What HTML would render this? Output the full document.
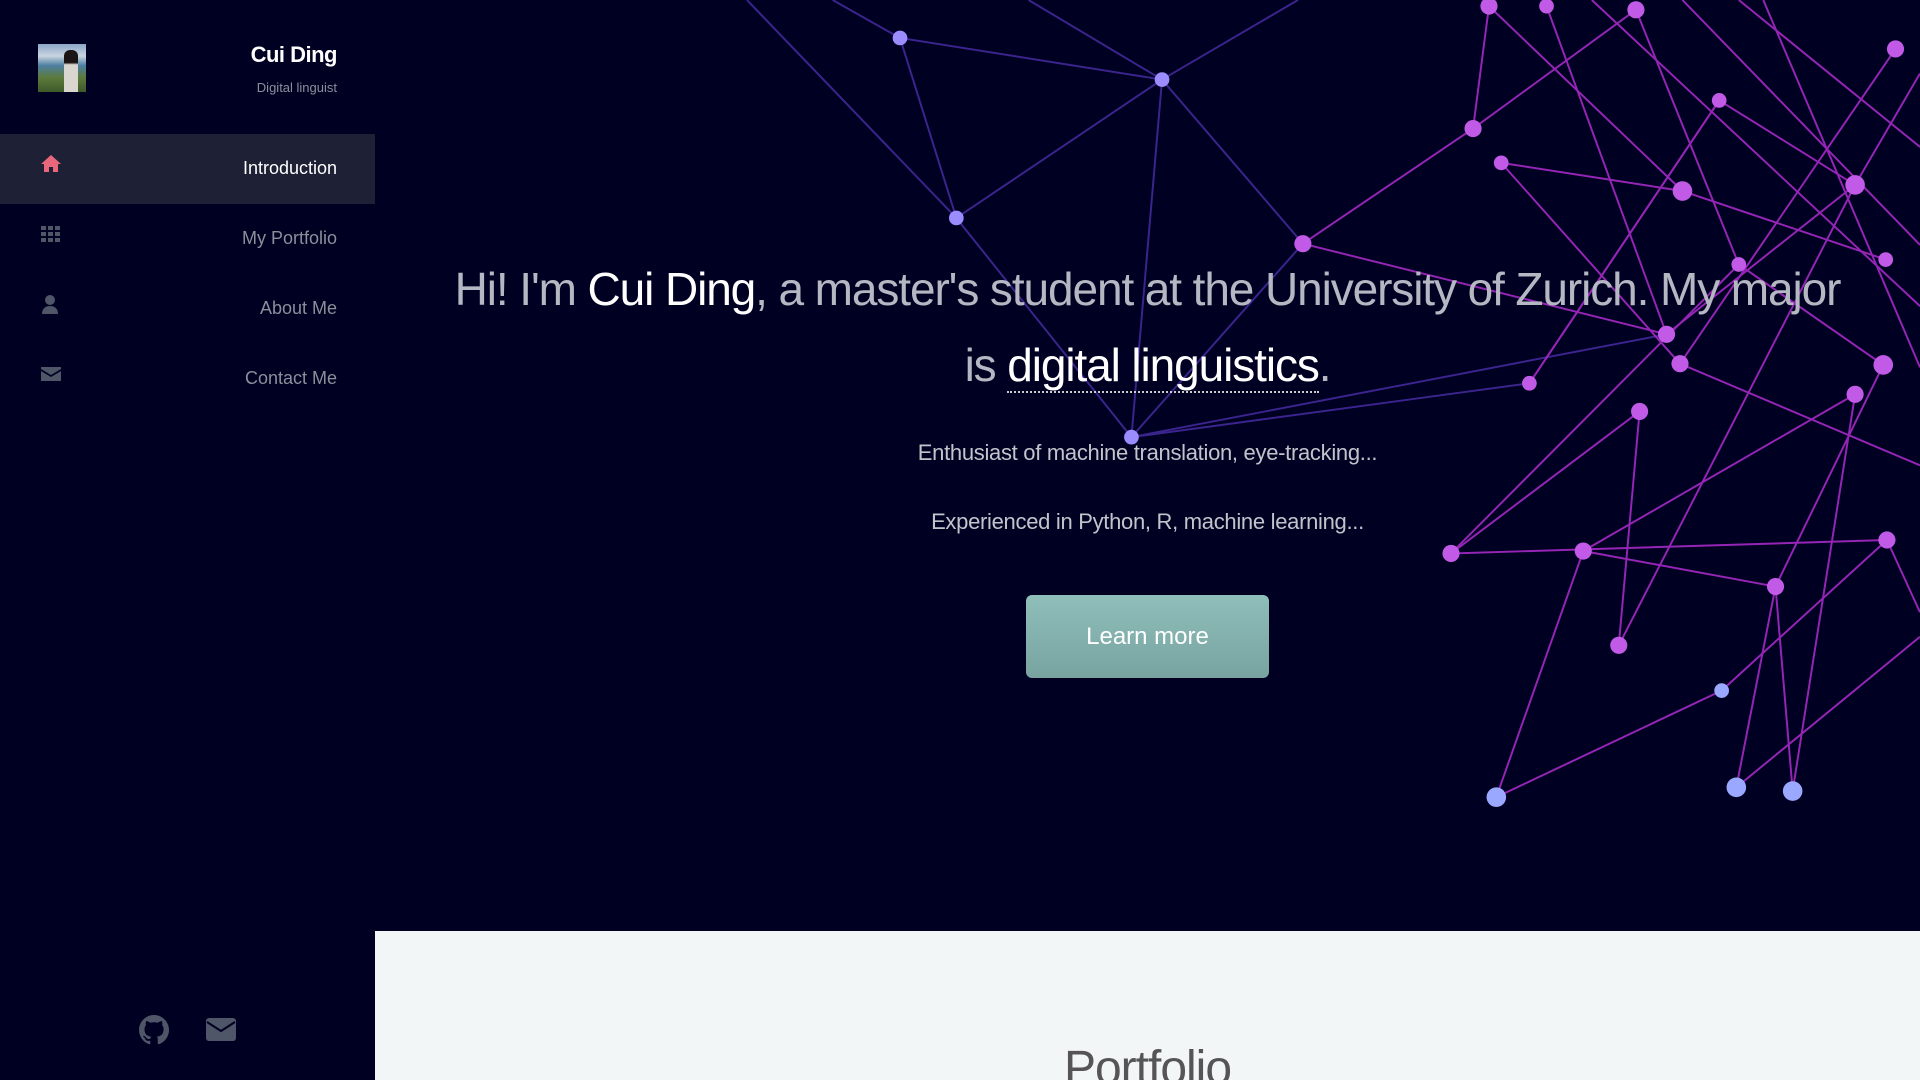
<!DOCTYPE html>
<html style="overflow:hidden;width:1920px;height:1080px"><head><meta charset="utf-8"><style>
*{margin:0;padding:0;box-sizing:border-box}
body{width:1920px;height:1080px;overflow:hidden;background:#000022;font-family:"Liberation Sans",sans-serif;position:relative}
.side{position:absolute;left:0;top:0;width:375px;height:1080px;background:#000022}
.avatar{position:absolute;left:38px;top:44px;width:48px;height:48px;background:linear-gradient(180deg,#8aa6c8 0%,#c9d4e0 25%,#4d7fa0 45%,#5d7a3c 70%,#3d5a2a 100%)}
.avatar:after{content:"";position:absolute;left:26px;top:6px;width:14px;height:42px;background:linear-gradient(#1a1414 30%,#d8d6cf 35%);border-radius:6px 6px 0 0}
.name{position:absolute;right:38px;top:42px;color:#fff;font-weight:bold;font-size:22px;letter-spacing:-0.5px}
.role{position:absolute;right:38px;top:80px;color:#8a8f9a;font-size:13px}
.nav{position:absolute;left:0;width:375px;height:70px}
.nav.active{background:#1e2035}
.nav span{position:absolute;right:38px;top:24px;font-size:18px;color:#8a8f9a}
.nav.active span{color:#fff}
.nav svg{position:absolute;left:40px;top:20px}
.hero{position:absolute;left:375px;top:0;width:1545px;height:931px;background:#000022;overflow:hidden}
.bottom{position:absolute;left:375px;top:931px;width:1545px;height:149px;background:#f2f6f6;overflow:hidden}
.bottom h2{position:absolute;width:100%;text-align:center;top:110px;font-size:48px;font-weight:normal;color:#555;letter-spacing:-1px}
.h1{position:absolute;left:0;width:1545px;text-align:center;color:#b5b8c2;font-size:46px;letter-spacing:-1.1px;white-space:nowrap}
.h1 b{font-weight:normal;color:#fff}
.u{border-bottom:2px dotted #ccc;color:#fff}
.p{position:absolute;left:0;width:1545px;text-align:center;color:#c2c4cc;font-size:22px;letter-spacing:-0.3px}
.btn{position:absolute;left:651px;top:595px;width:243px;height:83px;border-radius:6px;background:linear-gradient(#8fbfba,#78a3a0);color:#fff;font-size:24px;text-align:center;line-height:83px}
</style></head><body>
<div class="hero">
<svg style="position:absolute;left:-375px;top:0" width="1920" height="1080" viewBox="0 0 1568 882">
<g stroke-width="1.6" fill="none">
<g stroke="#4a2ea8" opacity=".8">
<line x1="610" y1="0" x2="781" y2="178"/><line x1="735" y1="31" x2="781" y2="178"/><line x1="735" y1="31" x2="949" y2="65"/><line x1="680" y1="0" x2="735" y2="31"/><line x1="781" y1="178" x2="949" y2="65"/><line x1="949" y1="65" x2="924" y2="357"/><line x1="781" y1="178" x2="924" y2="357"/><line x1="949" y1="65" x2="1060" y2="0"/><line x1="949" y1="65" x2="1064" y2="199"/><line x1="924" y1="357" x2="1064" y2="199"/><line x1="924" y1="357" x2="1249" y2="313"/><line x1="924" y1="357" x2="1361" y2="273"/><line x1="840" y1="0" x2="949" y2="65"/>
</g>
<g stroke="#b02ccf" opacity=".85">
<line x1="1064" y1="199" x2="1203" y2="105"/><line x1="1064" y1="199" x2="1361" y2="273"/><line x1="1203" y1="105" x2="1216" y2="5"/><line x1="1226" y1="133" x2="1374" y2="156"/><line x1="1203" y1="105" x2="1336" y2="8"/><line x1="1226" y1="133" x2="1372" y2="297"/><line x1="1216" y1="5" x2="1374" y2="156"/><line x1="1263" y1="5" x2="1361" y2="273"/><line x1="1336" y1="8" x2="1420" y2="216"/><line x1="1404" y1="82" x2="1515" y2="151"/><line x1="1404" y1="82" x2="1249" y2="313"/><line x1="1374" y1="156" x2="1540" y2="212"/><line x1="1420" y1="216" x2="1538" y2="298"/><line x1="1361" y1="273" x2="1515" y2="151"/><line x1="1372" y1="297" x2="1548" y2="40"/><line x1="1339" y1="336" x2="1185" y2="452"/><line x1="1339" y1="336" x2="1322" y2="527"/><line x1="1515" y1="322" x2="1293" y2="450"/><line x1="1538" y1="298" x2="1450" y2="479"/><line x1="1450" y1="479" x2="1418" y2="643"/><line x1="1541" y1="441" x2="1406" y2="564"/><line x1="1450" y1="479" x2="1464" y2="646"/><line x1="1293" y1="450" x2="1222" y2="651"/><line x1="1406" y1="564" x2="1222" y2="651"/><line x1="1185" y1="452" x2="1541" y2="441"/><line x1="1322" y1="527" x2="1515" y2="151"/><line x1="1464" y1="646" x2="1515" y2="322"/><line x1="1568" y1="520" x2="1418" y2="643"/><line x1="1374" y1="0" x2="1568" y2="200"/><line x1="1420" y1="0" x2="1568" y2="120"/><line x1="1249" y1="313" x2="1404" y2="82"/><line x1="1372" y1="297" x2="1568" y2="380"/><line x1="1293" y1="450" x2="1450" y2="479"/><line x1="1515" y1="151" x2="1568" y2="60"/><line x1="1440" y1="0" x2="1568" y2="300"/><line x1="1300" y1="0" x2="1568" y2="250"/><line x1="1185" y1="452" x2="1420" y2="216"/><line x1="1541" y1="441" x2="1568" y2="500"/>
</g>
</g>
<g fill="#9b8cff">
<circle cx="735" cy="31" r="6"/><circle cx="949" cy="65" r="6"/><circle cx="781" cy="178" r="6"/><circle cx="924" cy="357" r="6"/>
<circle cx="1222" cy="651" r="8" fill="#9aa8ff"/><circle cx="1418" cy="643" r="8" fill="#9aa8ff"/><circle cx="1464" cy="646" r="8" fill="#9aa8ff"/><circle cx="1406" cy="564" r="6" fill="#9aa8ff"/>
</g>
<g fill="#c25ae8">
<circle cx="1064" cy="199" r="7"/><circle cx="1203" cy="105" r="7"/><circle cx="1226" cy="133" r="6"/><circle cx="1216" cy="5" r="7"/><circle cx="1263" cy="5" r="6"/><circle cx="1336" cy="8" r="7"/><circle cx="1374" cy="156" r="8"/><circle cx="1404" cy="82" r="6"/><circle cx="1420" cy="216" r="6"/><circle cx="1361" cy="273" r="7"/><circle cx="1372" cy="297" r="7"/><circle cx="1249" cy="313" r="6"/><circle cx="1339" cy="336" r="7"/><circle cx="1515" cy="151" r="8"/><circle cx="1540" cy="212" r="6"/><circle cx="1538" cy="298" r="8"/><circle cx="1515" cy="322" r="7"/><circle cx="1185" cy="452" r="7"/><circle cx="1293" cy="450" r="7"/><circle cx="1322" cy="527" r="7"/><circle cx="1450" cy="479" r="7"/><circle cx="1541" cy="441" r="7"/><circle cx="1548" cy="40" r="7"/>
</g>
</svg>
<div class="h1" style="top:262px">Hi! I'm <b>Cui Ding</b>, a master's student at the University of Zurich. My major</div>
<div class="h1" style="top:338px">is <span class="u">digital linguistics</span>.</div>
<div class="p" style="top:440px">Enthusiast of machine translation, eye-tracking...</div>
<div class="p" style="top:509px">Experienced in Python, R, machine learning...</div>
<div class="btn">Learn more</div>
</div>
<div class="bottom"><h2>Portfolio</h2></div>
<div class="side">
<div class="avatar"></div>
<div class="name">Cui Ding</div>
<div class="role">Digital linguist</div>
<div class="nav active" style="top:134px"><svg width="22" height="20" viewBox="0 0 22 20"><path d="M11 1L1 10h3v8h5v-5h4v5h5v-8h3z" fill="#e8677a"/></svg><span>Introduction</span></div>
<div class="nav" style="top:204px"><svg width="22" height="20" viewBox="0 0 22 20"><g fill="#4f5668"><rect x="1" y="2" width="5" height="4"/><rect x="8" y="2" width="5" height="4"/><rect x="15" y="2" width="5" height="4"/><rect x="1" y="8" width="5" height="4"/><rect x="8" y="8" width="5" height="4"/><rect x="15" y="8" width="5" height="4"/><rect x="1" y="14" width="5" height="4"/><rect x="8" y="14" width="5" height="4"/><rect x="15" y="14" width="5" height="4"/></g></svg><span>My Portfolio</span></div>
<div class="nav" style="top:274px"><svg width="22" height="22" viewBox="0 0 22 22"><g fill="#4f5668"><circle cx="10" cy="6" r="5"/><path d="M2 20c0-5 3-8 8-8s8 3 8 8z"/></g></svg><span>About Me</span></div>
<div class="nav" style="top:344px"><svg width="22" height="20" viewBox="0 0 22 20"><path d="M1 3h20v2l-10 6L1 5z M1 7l10 6 10-6v10H1z" fill="#4f5668"/></svg><span>Contact Me</span></div>
<svg style="position:absolute;left:139px;top:1015px" width="30" height="30" viewBox="0 0 16 16"><path fill="#4f5668" d="M8 0C3.58 0 0 3.58 0 8c0 3.54 2.29 6.53 5.47 7.59.4.07.55-.17.55-.38 0-.19-.01-.82-.01-1.49-2.01.37-2.53-.49-2.69-.94-.09-.23-.48-.94-.82-1.130-.28-.15-.68-.52-.01-.53.63-.01 1.08.58 1.23.82.72 1.21 1.87.87 2.33.66.07-.52.28-.87.51-1.07-1.78-.2-3.64-.89-3.64-3.95 0-.87.31-1.59.82-2.15-.08-.2-.36-1.02.08-2.12 0 0 .67-.21 2.2.82.64-.18 1.32-.27 2-.27.68 0 1.36.09 2 .27 1.53-1.04 2.2-.82 2.2-.82.44 1.1.16 1.92.08 2.12.51.56.82 1.27.82 2.15 0 3.07-1.87 3.75-3.65 3.95.29.25.54.73.54 1.48 0 1.07-.01 1.93-.01 2.2 0 .21.15.46.55.38A8.013 8.013 0 0016 8c0-4.42-3.58-8-8-8z"/></svg>
<svg style="position:absolute;left:206px;top:1018px" width="30" height="24" viewBox="0 0 30 24"><rect x="0" y="0" width="30" height="23" rx="3" fill="#4f5668"/><path d="M1 4l14 9 14-9" stroke="#000022" stroke-width="2" fill="none"/></svg>
</div>
</body></html>
